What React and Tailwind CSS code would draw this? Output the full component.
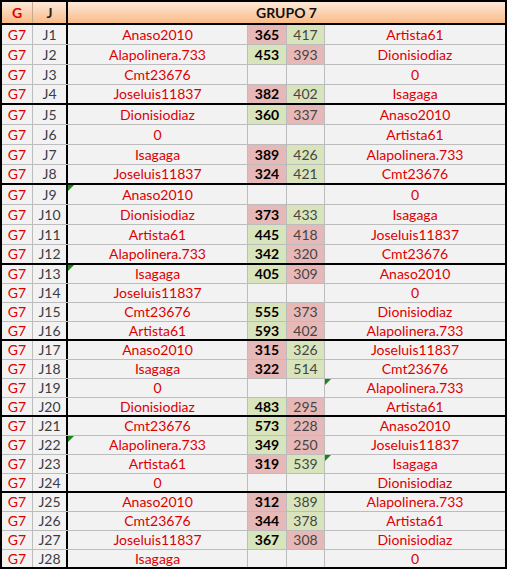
import React from "react";

const rows = [
  ["J1", "Anaso2010", 365, 417, "Artista61"],
  ["J2", "Alapolinera.733", 453, 393, "Dionisiodiaz"],
  ["J3", "Cmt23676", null, null, "0"],
  ["J4", "Joseluis11837", 382, 402, "Isagaga"],
  ["J5", "Dionisiodiaz", 360, 337, "Anaso2010"],
  ["J6", "0", null, null, "Artista61"],
  ["J7", "Isagaga", 389, 426, "Alapolinera.733"],
  ["J8", "Joseluis11837", 324, 421, "Cmt23676"],
  ["J9", "Anaso2010", null, null, "0", "l"],
  ["J10", "Dionisiodiaz", 373, 433, "Isagaga"],
  ["J11", "Artista61", 445, 418, "Joseluis11837"],
  ["J12", "Alapolinera.733", 342, 320, "Cmt23676"],
  ["J13", "Isagaga", 405, 309, "Anaso2010", "l"],
  ["J14", "Joseluis11837", null, null, "0"],
  ["J15", "Cmt23676", 555, 373, "Dionisiodiaz"],
  ["J16", "Artista61", 593, 402, "Alapolinera.733"],
  ["J17", "Anaso2010", 315, 326, "Joseluis11837"],
  ["J18", "Isagaga", 322, 514, "Cmt23676"],
  ["J19", "0", null, null, "Alapolinera.733", "r"],
  ["J20", "Dionisiodiaz", 483, 295, "Artista61"],
  ["J21", "Cmt23676", 573, 228, "Anaso2010"],
  ["J22", "Alapolinera.733", 349, 250, "Joseluis11837", "l"],
  ["J23", "Artista61", 319, 539, "Isagaga", "r"],
  ["J24", "0", null, null, "Dionisiodiaz"],
  ["J25", "Anaso2010", 312, 389, "Alapolinera.733"],
  ["J26", "Cmt23676", 344, 378, "Artista61"],
  ["J27", "Joseluis11837", 367, 308, "Dionisiodiaz"],
  ["J28", "Isagaga", null, null, "0"],
];

function Tri() {
  return (
    <svg className="absolute left-0 top-0" width="6" height="6" viewBox="0 0 6 6">
      <polygon points="0,0 6,0 0,6" fill="#138a13" />
    </svg>
  );
}

function Row({ r, i }) {
  const [j, a, sa, sb, b, tri] = r;
  const endGroup = (i + 1) % 4 === 0;
  const h = i < 12 ? "h-[20px]" : "h-[19px]";
  const bb = endGroup ? "border-b-2 border-b-black" : "border-b border-b-[#bcbcbc]";
  const has = sa !== null;
  const aCol = has ? (sa > sb ? "bg-[#d8e4bc]" : "bg-[#e6b8b7]") : "";
  const bCol = has ? (sb > sa ? "bg-[#d8e4bc]" : "bg-[#e6b8b7]") : "";
  return (
    <div className={`flex ${h} ${bb} text-[14px] leading-none`}>
      <div className="w-[31px] flex items-center justify-center border-r border-r-[#bcbcbc] text-[#dd0000]">G7</div>
      <div className="w-[35px] flex items-center justify-center border-r-2 border-r-black text-[#3c3c44]">{j}</div>
      <div className="relative w-[180px] flex items-center justify-center border-r border-r-[#bcbcbc] text-[#dd0000]">
        {tri === "l" && <Tri />}
        {a}
      </div>
      <div className={`w-[39px] flex items-center justify-center border-r border-r-[#bcbcbc] font-bold text-black ${aCol}`}>
        {has ? sa : ""}
      </div>
      <div className={`w-[38px] flex items-center justify-center border-r border-r-[#bcbcbc] text-[#444444] ${bCol}`}>
        {has ? sb : ""}
      </div>
      <div className="relative w-[180px] flex items-center justify-center text-[#dd0000]">
        {tri === "r" && <Tri />}
        {b}
      </div>
    </div>
  );
}

export default function App() {
  return (
    <div className="w-[507px] h-[570px] bg-white" style={{ fontFamily: "Lato, 'Open Sans', sans-serif" }}>
      <div className="w-[507px] border-2 border-b-0 border-black bg-[#f2f2f2]">
        <div className="flex h-[23px] border-b-2 border-b-black bg-linear-to-b from-[#fde9d9] to-[#f8bb88] text-[14px] font-bold leading-none">
          <div className="w-[31px] flex items-center justify-center border-r border-r-[#c9a98c] text-[#dd0000]">G</div>
          <div className="w-[35px] flex items-center justify-center border-r-2 border-r-black text-[#222]">J</div>
          <div className="flex-1 flex items-center justify-center text-[#111]">GRUPO 7</div>
        </div>
        {rows.map((r, i) => (
          <Row key={r[0]} r={r} i={i} />
        ))}
      </div>
    </div>
  );
}
